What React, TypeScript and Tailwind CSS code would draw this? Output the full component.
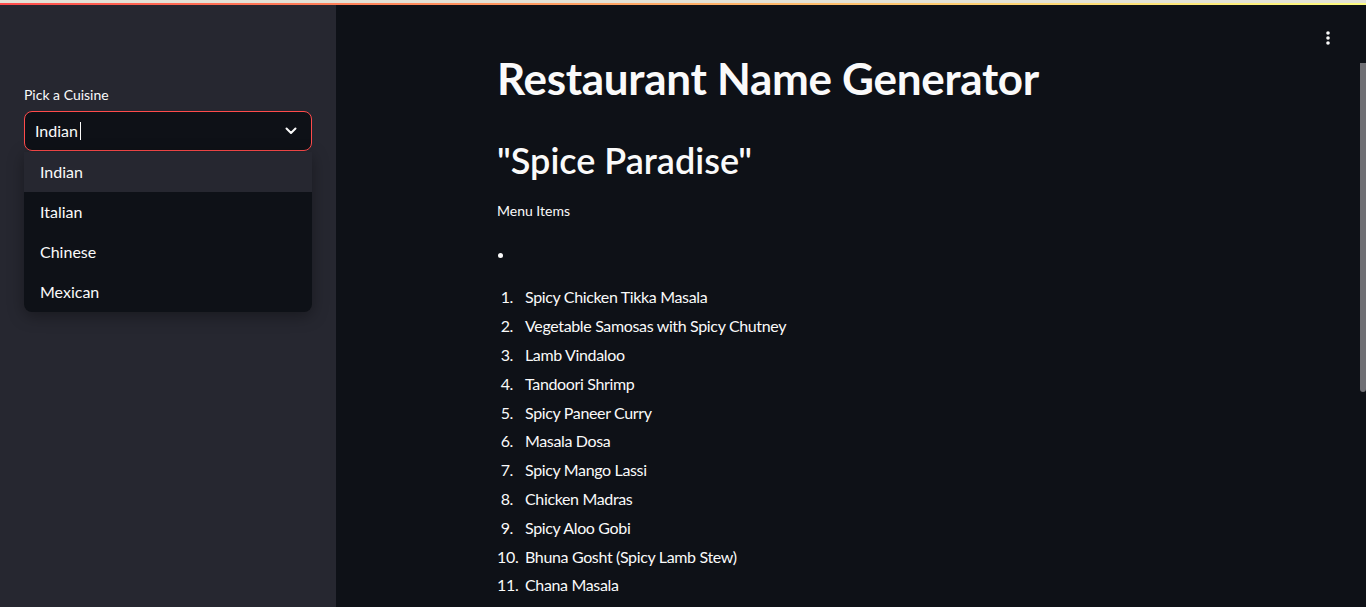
import React from "react";

const cuisines = ["Indian", "Italian", "Chinese", "Mexican"];

const menuItems = [
  "Spicy Chicken Tikka Masala",
  "Vegetable Samosas with Spicy Chutney",
  "Lamb Vindaloo",
  "Tandoori Shrimp",
  "Spicy Paneer Curry",
  "Masala Dosa",
  "Spicy Mango Lassi",
  "Chicken Madras",
  "Spicy Aloo Gobi",
  "Bhuna Gosht (Spicy Lamb Stew)",
  "Chana Masala",
];

function Sidebar() {
  return (
    <aside className="w-[336px] shrink-0 bg-[#262730] px-6 pt-[80px]">
      <label className="block text-[14px] leading-5 text-[#fafafa] mb-[6px]">Pick a Cuisine</label>

      <div className="flex h-[40px] items-center justify-between rounded-lg border border-[#ff4b4b] bg-[#0e1117] pl-[10px] pr-[14px]">
        <div className="flex items-center text-[16px] text-[#fafafa]">
          Indian
          <span className="ml-[2px] inline-block h-[18px] w-px bg-[#fafafa]"></span>
        </div>
        <svg width="12" height="8" viewBox="0 0 12 8" fill="none">
          <polyline points="1.5,1.5 6,6 10.5,1.5" stroke="#fafafa" strokeWidth="2" strokeLinecap="round" strokeLinejoin="round" />
        </svg>
      </div>

      <ul className="mt-px overflow-hidden rounded-b-lg bg-[#0e1117] shadow-[0_4px_16px_rgba(0,0,0,0.35)]">
        {cuisines.map((c, i) => (
          <li
            key={c}
            className={
              "flex h-[40px] items-center px-4 text-[16px] text-[#fafafa] " +
              (i === 0 ? "bg-[#262730]" : "")
            }
          >
            {c}
          </li>
        ))}
      </ul>
    </aside>
  );
}

function MenuList() {
  return (
    <ol className="flex flex-col">
      {menuItems.map((item, i) => (
        <li key={item} className="flex h-[28.8px] items-center text-[16px] tracking-[-0.35px] text-[#fafafa]">
          <span className="w-[16px] text-right">{i + 1}.</span>
          <span className="ml-[12px]">{item}</span>
        </li>
      ))}
    </ol>
  );
}

export default function App() {
  return (
    <div
      className="relative flex h-[607px] flex-col overflow-hidden bg-[#0e1117]"
      style={{ fontFamily: "Lato, 'Noto Sans', sans-serif" }}
    >
      <div className="h-[3px] shrink-0 bg-[#e3e2d6]"></div>
      <div className="h-[2px] shrink-0 bg-gradient-to-r from-[#ff4b4b] to-[#fffd80]"></div>

      <div className="flex min-h-0 flex-1">
        <Sidebar />

        <main className="flex-1 pl-[161px] pt-[47px]">
          <h1 className="text-[44px] font-bold leading-[1.2] tracking-[-0.3px] text-[#fafafa]">
            Restaurant Name Generator
          </h1>
          <h2 className="mt-[34px] text-[36px] font-semibold leading-[1.2] text-[#fafafa]">
            "Spice Paradise"
          </h2>
          <p className="mt-[19px] text-[14px] leading-5 text-[#fafafa]">Menu Items</p>

          <div className="mt-[32px] ml-[1px] h-[5px] w-[5px] rounded-full bg-[#fafafa]"></div>

          <div className="mt-[25px]">
            <MenuList />
          </div>
        </main>
      </div>

      <button className="absolute right-[35px] top-[29px] p-0">
        <svg width="6" height="18" viewBox="0 0 6 18" fill="#fafafa">
          <circle cx="3" cy="4" r="1.8" />
          <circle cx="3" cy="9" r="1.8" />
          <circle cx="3" cy="14" r="1.8" />
        </svg>
      </button>

      <div className="absolute right-0 top-[63px] h-[329px] w-[6px] rounded-b-sm bg-[#6f6f74]"></div>
    </div>
  );
}
